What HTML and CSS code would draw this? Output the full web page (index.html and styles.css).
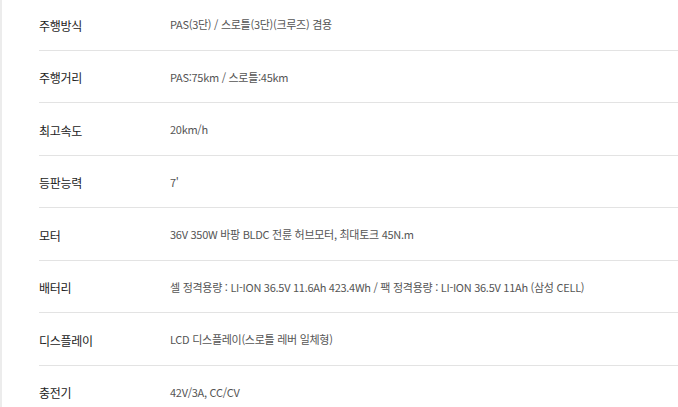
FILE: index.html
```html
<!DOCTYPE html>
<html lang="ko">
<head>
<meta charset="utf-8">
<link rel="stylesheet" href="styles.css">
</head>
<body>
<div class="page">
  <dl class="spec">
    <div class="row"><dt>주행방식</dt><dd>PAS(3단) / 스로틀(3단)(크루즈) 겸용</dd></div>
    <div class="row"><dt>주행거리</dt><dd>PAS:75km / 스로틀:45km</dd></div>
    <div class="row"><dt>최고속도</dt><dd>20km/h</dd></div>
    <div class="row"><dt>등판능력</dt><dd>7'</dd></div>
    <div class="row"><dt>모터</dt><dd>36V 350W 바팡 BLDC 전륜 허브모터, 최대토크 45N.m</dd></div>
    <div class="row"><dt>배터리</dt><dd>셀 정격용량 : LI-ION 36.5V 11.6Ah 423.4Wh / 팩 정격용량 : LI-ION 36.5V 11Ah (삼성 CELL)</dd></div>
    <div class="row"><dt>디스플레이</dt><dd>LCD 디스플레이(스로틀 레버 일체형)</dd></div>
    <div class="row"><dt>충전기</dt><dd>42V/3A, CC/CV</dd></div>
  </dl>
</div>
</body>
</html>
```
FILE: styles.css
```css
html, body {
  margin: 0;
  padding: 0;
  background: #fff;
  overflow: hidden;
}
body {
  font-family: "Noto Sans CJK KR", "Noto Sans", sans-serif;
}
.page {
  border-left: 2px solid #ececec;
  min-height: 407px;
  padding-left: 37px;
}
.spec {
  margin: -2px 0 0 0;
  padding: 0;
}
.row {
  display: flex;
  align-items: center;
  height: 51.5px;
  border-bottom: 1px solid #e3e3e3;
}
.row dt {
  width: 131px;
  flex: none;
  font-size: 12px;
  color: #222;
  letter-spacing: -0.3px;
  padding-top: 3px;
}
.row dd {
  margin: 0;
  font-size: 11px;
  color: #555;
  letter-spacing: -0.28px;
  padding-top: 1px;
}
```
